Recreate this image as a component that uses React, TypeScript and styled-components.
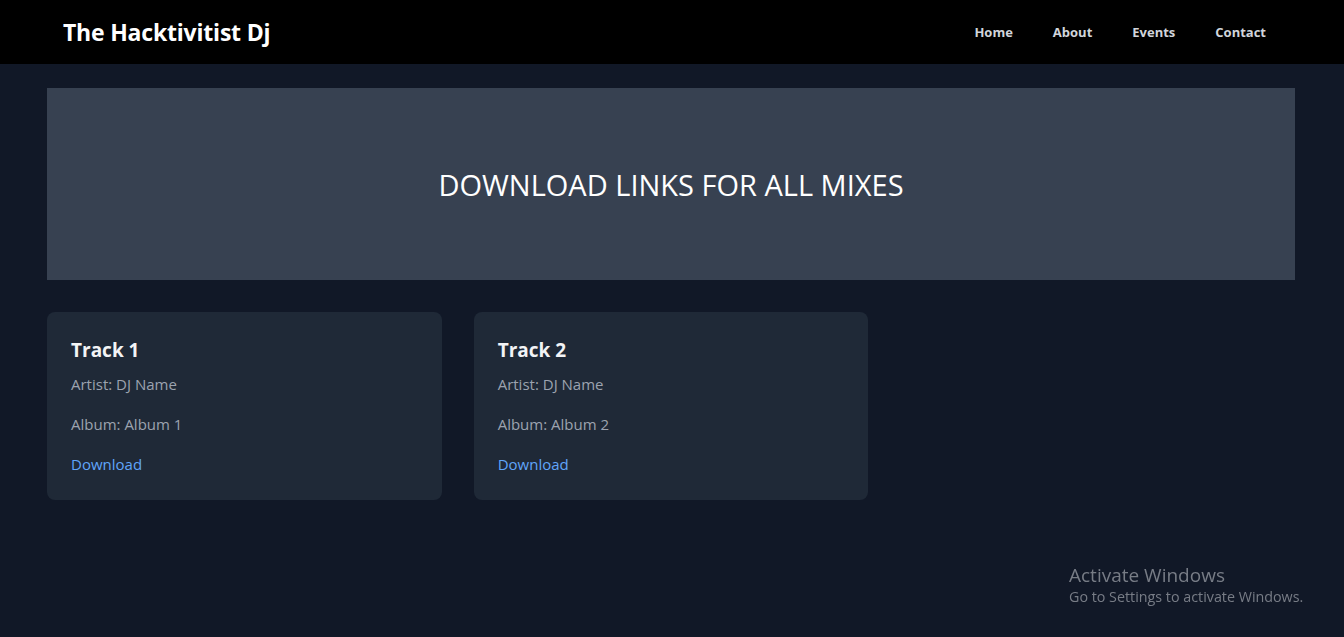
import React from 'react'
import styled, { createGlobalStyle } from 'styled-components';

const GlobalStyle = createGlobalStyle`
  html, body {
    margin: 0;
    padding: 0;
    background-color: #111827;
    font-family: "Open Sans", "Noto Sans", sans-serif;
  }
  #root {
    min-height: 100vh;
    background-color: #111827;
  }
`;

interface Track {
  title: string;
  artist: string;
  album: string;
}

const tracks: Track[] = [
  { title: 'Track 1', artist: 'DJ Name', album: 'Album 1' },
  { title: 'Track 2', artist: 'DJ Name', album: 'Album 2' },
];

const links = ['Home', 'About', 'Events', 'Contact'];

export default function App() {
  return (
    <>
      <GlobalStyle />
      <Nav>
        <Brand>The Hacktivitist Dj</Brand>
        <NavLinks>
          {links.map((link) => (
            <NavLink href="#" key={link}>{link}</NavLink>
          ))}
        </NavLinks>
      </Nav>
      <Main>
        <Hero>
          <HeroTitle>DOWNLOAD LINKS FOR ALL MIXES</HeroTitle>
        </Hero>
        <Grid>
          {tracks.map((track) => (
            <Card key={track.title}>
              <CardTitle>{track.title}</CardTitle>
              <Meta>Artist: {track.artist}</Meta>
              <Meta>Album: {track.album}</Meta>
              <DownloadLink href="#">Download</DownloadLink>
            </Card>
          ))}
        </Grid>
      </Main>
      <Watermark>
        <WatermarkTitle>Activate Windows</WatermarkTitle>
        <WatermarkText>Go to Settings to activate Windows.</WatermarkText>
      </Watermark>
    </>
  )
}

const Nav = styled.nav`
    height: 64px;
    background-color: #000;
    display: flex;
    align-items: center;
    justify-content: space-between;
    padding: 0 58px 0 63px;
`;
const Brand = styled.h1`
    margin: 0;
    color: #fff;
    font-size: 23px;
    font-weight: 700;
    letter-spacing: -0.2px;
`;
const NavLinks = styled.div`
    display: flex;
    align-items: center;
`;
const NavLink = styled.a`
    color: #d1d5db;
    font-size: 13px;
    font-weight: 700;
    text-decoration: none;
    padding: 0 20px;
`;
const Main = styled.main`
    padding: 24px 49px 24px 47px;
`;
const Hero = styled.section`
    height: 192px;
    background-color: #374151;
    display: flex;
    align-items: center;
    justify-content: center;
`;
const HeroTitle = styled.h2`
    margin: 0;
    color: #fff;
    font-size: 29px;
    font-weight: 400;
`;
const Grid = styled.div`
    margin-top: 32px;
    display: grid;
    grid-template-columns: repeat(3, 1fr);
    gap: 32px;
`;
const Card = styled.div`
    background-color: #1f2937;
    border-radius: 8px;
    padding: 24px;
    display: flex;
    flex-direction: column;
    align-items: flex-start;
`;
const CardTitle = styled.h3`
    margin: 0 0 8px;
    color: #f3f4f6;
    font-size: 19px;
    line-height: 28px;
    font-weight: 700;
`;
const Meta = styled.p`
    margin: 0 0 16px;
    color: #9ca3af;
    font-size: 15px;
    line-height: 24px;
`;
const DownloadLink = styled.a`
    color: #60a5fa;
    font-size: 15px;
    line-height: 24px;
    text-decoration: none;
`;
const Watermark = styled.div`
    position: fixed;
    left: 1069px;
    top: 563px;
    pointer-events: none;
`;
const WatermarkTitle = styled.div`
    color: #9a9ea6;
    opacity: 0.75;
    font-size: 19px;
    line-height: 24px;
`;
const WatermarkText = styled.div`
    color: #9a9ea6;
    opacity: 0.75;
    font-size: 14.3px;
    line-height: 20px;
`;
